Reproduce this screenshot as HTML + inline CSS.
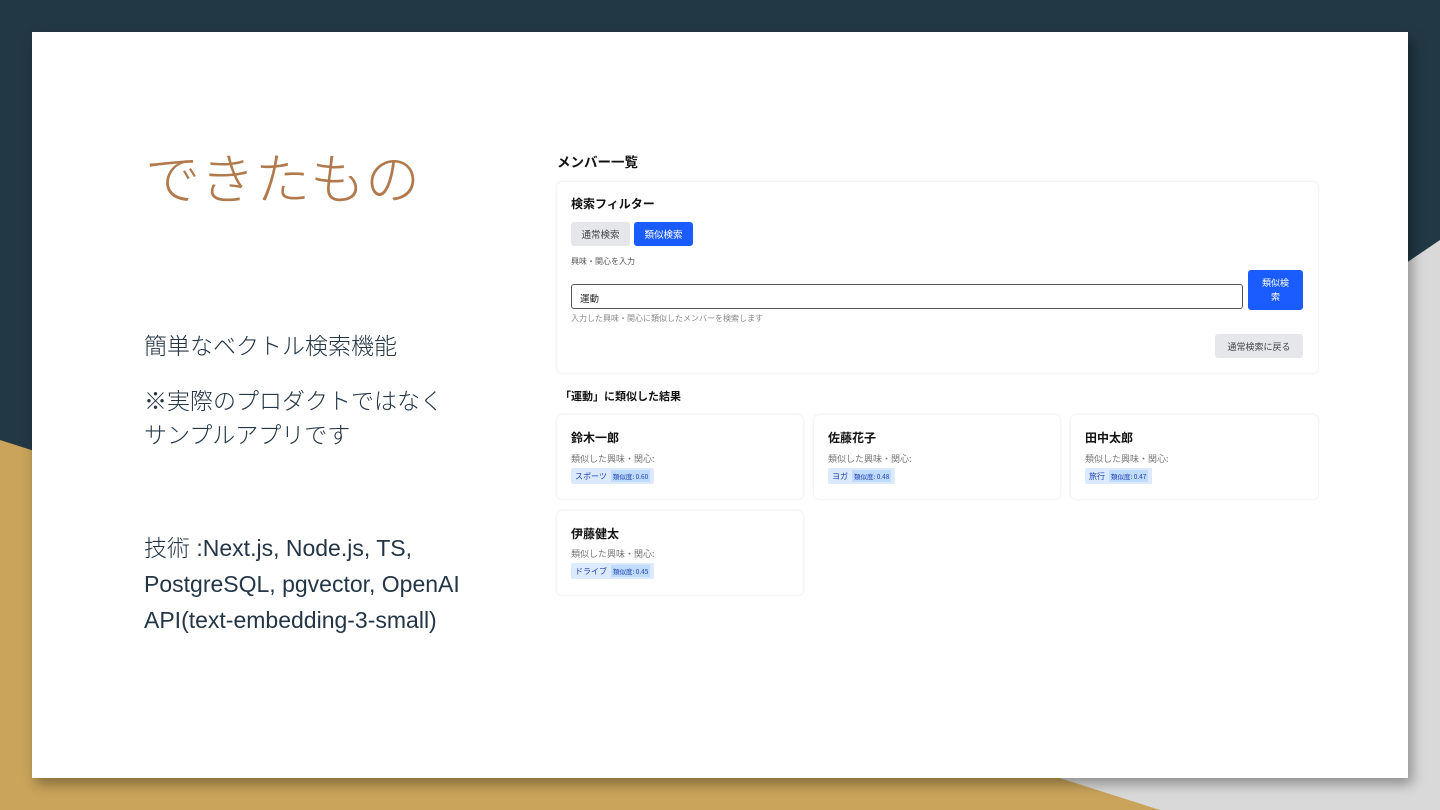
<!DOCTYPE html>
<html><head><meta charset="utf-8"><style>
*{margin:0;padding:0;box-sizing:border-box}
body{width:1440px;height:810px;position:relative;overflow:hidden;background:#233845;font-family:"Liberation Sans","Noto Sans CJK JP",sans-serif}
.abs{position:absolute}
.slide{left:32px;top:32px;width:1376px;height:746px;background:#fff;box-shadow:4px 6px 12px rgba(0,0,0,.35)}
.title{left:145px;top:148px;font-size:55px;color:#b07a4d;font-family:"Noto Sans CJK JP",sans-serif;font-weight:300;line-height:1}
.body{left:144px;font-size:23px;color:#243646;line-height:34px;font-family:"Noto Sans CJK JP",sans-serif;font-weight:300}
.card{background:#fff;border-radius:5px;box-shadow:0 0 3px rgba(0,0,0,.12)}
.jp{font-family:"Noto Sans CJK JP",sans-serif}
.btn{border-radius:3px;font-size:9.5px;display:flex;align-items:center;justify-content:center}
.name{font-size:12px;font-weight:bold;color:#111}
.sub{font-size:9px;color:#777}
.tag{background:#dbeafe;color:#1e40af;font-size:8px;padding:2px 4px;border-radius:2px;display:inline-flex;align-items:center;gap:4px}
.tag b{font-weight:normal;font-size:6.5px;background:#bfdbfe;padding:1px 2px}
</style></head><body>
<svg class="abs" style="left:0;top:0" width="1440" height="810">
<polygon points="1440,240 1440,810 600,810" fill="#d9d9d9"/>
<polygon points="0,440 1160,810 0,810" fill="#c9a45a"/>
</svg>
<div class="abs slide"></div>
<div class="abs title">できたもの</div>
<div class="abs body" style="top:327px">簡単なベクトル検索機能</div>
<div class="abs body" style="top:382px">※実際のプロダクトではなく<br>サンプルアプリです</div>
<div class="abs body" style="top:530px;line-height:36px;font-family:'Liberation Sans','Noto Sans CJK JP',sans-serif">技術 :Next.js, Node.js, TS,<br>PostgreSQL, pgvector, OpenAI<br>API(text-embedding-3-small)</div>

<div class="abs jp" style="left:557px;top:151px;font-size:13.5px;font-weight:bold;color:#111">メンバー一覧</div>
<div class="abs card" style="left:557px;top:182px;width:761px;height:191px"></div>
<div class="abs jp" style="left:571px;top:195px;font-size:12px;font-weight:bold;color:#111">検索フィルター</div>
<div class="abs btn jp" style="left:571px;top:222px;width:59px;height:24px;background:#e5e7eb;color:#444">通常検索</div>
<div class="abs btn jp" style="left:634px;top:222px;width:59px;height:24px;background:#1a5cff;color:#fff">類似検索</div>
<div class="abs jp sub" style="left:571px;top:256px;font-size:8px;color:#555">興味・関心を入力</div>
<div class="abs jp" style="left:571px;top:284px;width:672px;height:25px;border:1px solid #555;border-radius:3px;font-size:9.5px;padding:6px 8px;color:#222">運動</div>
<div class="abs btn jp" style="left:1248px;top:270px;width:55px;height:40px;background:#1a5cff;color:#fff;font-size:9px;text-align:center;line-height:14px">類似検<br>索</div>
<div class="abs jp" style="left:571px;top:313px;font-size:8px;color:#888">入力した興味・関心に類似したメンバーを検索します</div>
<div class="abs btn jp" style="left:1215px;top:334px;width:88px;height:24px;background:#e5e7eb;color:#444;font-size:9px">通常検索に戻る</div>
<div class="abs jp" style="left:560px;top:388px;font-size:11px;font-weight:bold;color:#111">「運動」に類似した結果</div>

<div class="abs card" style="left:557px;top:415px;width:246px;height:84px"></div>
<div class="abs card" style="left:814px;top:415px;width:246px;height:84px"></div>
<div class="abs card" style="left:1071px;top:415px;width:247px;height:84px"></div>
<div class="abs card" style="left:557px;top:511px;width:246px;height:84px"></div>

<div class="abs jp name" style="left:571px;top:429px">鈴木一郎</div>
<div class="abs jp sub" style="left:571px;top:452px">類似した興味・関心:</div>
<div class="abs jp tag" style="left:571px;top:468px">スポーツ<b>類似度: 0.60</b></div>

<div class="abs jp name" style="left:828px;top:429px">佐藤花子</div>
<div class="abs jp sub" style="left:828px;top:452px">類似した興味・関心:</div>
<div class="abs jp tag" style="left:828px;top:468px">ヨガ<b>類似度: 0.48</b></div>

<div class="abs jp name" style="left:1085px;top:429px">田中太郎</div>
<div class="abs jp sub" style="left:1085px;top:452px">類似した興味・関心:</div>
<div class="abs jp tag" style="left:1085px;top:468px">旅行<b>類似度: 0.47</b></div>

<div class="abs jp name" style="left:571px;top:525px">伊藤健太</div>
<div class="abs jp sub" style="left:571px;top:547px">類似した興味・関心:</div>
<div class="abs jp tag" style="left:571px;top:563px">ドライブ<b>類似度: 0.45</b></div>
</body></html>
